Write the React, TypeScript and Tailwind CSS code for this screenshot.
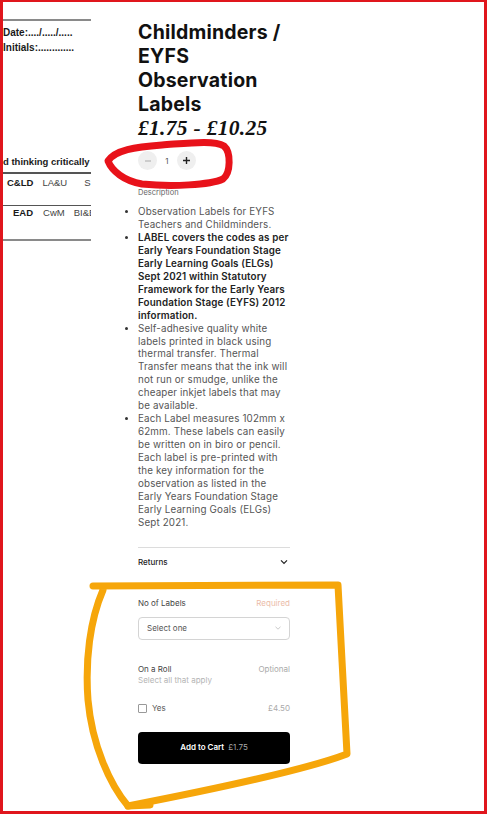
import React from "react";

const bodyFont = { fontFamily: "Inter, 'Noto Sans', sans-serif" };

const bullets: { bold?: boolean; lines: string[] }[] = [
  { lines: ["Observation Labels for EYFS", "Teachers and Childminders."] },
  {
    bold: true,
    lines: [
      "LABEL covers the codes as per",
      "Early Years Foundation Stage",
      "Early Learning Goals (ELGs)",
      "Sept 2021 within Statutory",
      "Framework for the Early Years",
      "Foundation Stage (EYFS) 2012",
      "information.",
    ],
  },
  {
    lines: [
      "Self-adhesive quality white",
      "labels printed in black using",
      "thermal transfer. Thermal",
      "Transfer means that the ink will",
      "not run or smudge, unlike the",
      "cheaper inkjet labels that may",
      "be available.",
    ],
  },
  {
    lines: [
      "Each Label measures 102mm x",
      "62mm. These labels can easily",
      "be written on in biro or pencil.",
      "Each label is pre-printed with",
      "the key information for the",
      "observation as listed in the",
      "Early Years Foundation Stage",
      "Early Learning Goals (ELGs)",
      "Sept 2021.",
    ],
  },
];

function LabelPreview() {
  return (
    <div
      className="w-[88px] shrink-0 overflow-hidden text-[#1a1a1a]"
      style={{ fontFamily: "'Liberation Sans', Arial, sans-serif" }}
    >
      <div className="mt-[17px] h-[2px] w-[88px] bg-[#8a8a8a]" />
      <div className="mt-[4px] text-[10px] font-bold leading-[15px]">Date:..../...../.....</div>
      <div className="text-[10px] font-bold leading-[15px]">Initials:.............</div>
      <div className="mt-[101px] whitespace-nowrap text-[9.5px] font-bold leading-[12px]">
        d thinking critically
      </div>
      <div className="mt-[4px] h-[1.5px] w-[88px] bg-[#555]" />
      <div className="mt-[3px] flex whitespace-nowrap text-[9.5px] leading-[12px]">
        <span className="ml-[4px] font-bold">C&amp;LD</span>
        <span className="ml-[9px] text-[#444]">LA&amp;U</span>
        <span className="ml-[17px] text-[#444]">S</span>
      </div>
      <div className="mt-[16px] h-[1.5px] w-[88px] bg-[#555]" />
      <div className="mt-[1px] flex whitespace-nowrap text-[9.5px] leading-[12px]">
        <span className="ml-[10px] font-bold">EAD</span>
        <span className="ml-[10px] text-[#444]">CwM</span>
        <span className="ml-[9px] text-[#444]">BI&amp;E</span>
      </div>
      <div className="mt-[20px] h-[2px] w-[88px] bg-[#8a8a8a]" />
    </div>
  );
}

function Quantity() {
  return (
    <div className="mt-[11px] flex items-center">
      <button className="flex h-[19px] w-[19px] items-center justify-center rounded-full bg-[#efefef]">
        <svg width="8" height="8" viewBox="0 0 8 8">
          <path d="M1 4h6" stroke="#b5b5b5" strokeWidth="1.2" />
        </svg>
      </button>
      <span className="w-[20px] text-center text-[8px] text-[#555]">1</span>
      <button className="flex h-[19px] w-[19px] items-center justify-center rounded-full bg-[#efefef]">
        <svg width="9" height="9" viewBox="0 0 9 9">
          <path d="M1 4.5h7M4.5 1v7" stroke="#222" strokeWidth="1.4" />
        </svg>
      </button>
    </div>
  );
}

function Options() {
  return (
    <div className="text-[8px] leading-[11px]">
      <div className="mt-[22px] flex justify-between">
        <span className="text-[#444]">No of Labels</span>
        <span className="text-[#ebbca8]">Required</span>
      </div>
      <div className="mt-[8px] flex h-[23px] items-center justify-between rounded-[4px] border border-[#d4d4d4] pl-[8px] pr-[8px]">
        <span className="text-[#555]">Select one</span>
        <svg width="6" height="4" viewBox="0 0 6 4">
          <path d="M0.5 0.8 3 3.2 5.5 0.8" fill="none" stroke="#bbb" strokeWidth="0.8" />
        </svg>
      </div>
      <div className="mt-[24px] flex justify-between">
        <span className="text-[#444]">On a Roll</span>
        <span className="text-[#aaa]">Optional</span>
      </div>
      <div className="text-[#b5b5b5]">Select all that apply</div>
      <div className="mt-[17px] flex items-center justify-between">
        <div className="flex items-center gap-[5px]">
          <span className="h-[9px] w-[9px] rounded-[1px] border border-[#999] bg-white" />
          <span className="text-[#555]">Yes</span>
        </div>
        <span className="text-[#aaa]">£4.50</span>
      </div>
      <button className="mt-[18px] flex h-[32px] w-full items-center justify-center gap-[4px] rounded-[4px] bg-black">
        <span className="font-semibold text-white">Add to Cart</span>
        <span className="text-[#a8a8a8]">£1.75</span>
      </button>
    </div>
  );
}

function ProductInfo() {
  return (
    <div className="ml-[47px] w-[152px] shrink-0" style={bodyFont}>
      <h1 className="mt-[18px] text-[19.5px] font-bold leading-[24px] tracking-[0.2px] text-[#111]">
        Childminders / EYFS Observation Labels
      </h1>
      <div
        className="text-[21.5px] font-bold italic leading-[24px] tracking-[0.3px] text-[#111]"
        style={{ fontFamily: "'Liberation Serif', 'Times New Roman', serif" }}
      >
        £1.75 - £10.25
      </div>
      <Quantity />
      <div className="mt-[18px] text-[7.5px] leading-[10px] text-[#666]">Description</div>
      <ul className="mt-[8px] list-disc whitespace-nowrap pl-0 text-[9.8px] leading-[12.95px] tracking-[0.15px] text-[#555] marker:text-[#333]">
        {bullets.map((b, i) => (
          <li key={i} className={b.bold ? "font-semibold text-[#222]" : ""}>
            {b.lines.map((l, j) => (
              <React.Fragment key={j}>
                {j > 0 && <br />}
                {l}
              </React.Fragment>
            ))}
          </li>
        ))}
      </ul>
      <div className="mt-[17px] flex h-[29px] items-center justify-between border-t border-[#dcdcdc]">
        <span className="text-[8px] font-medium text-[#222]">Returns</span>
        <svg width="8" height="6" viewBox="0 0 8 6" className="mr-[2px]">
          <path d="M1 1.3 4 4.3 7 1.3" fill="none" stroke="#222" strokeWidth="1.2" />
        </svg>
      </div>
      <Options />
    </div>
  );
}

export default function App() {
  return (
    <div className="relative h-[814px] w-[487px] overflow-hidden border-x-[3px] border-b-[3px] border-t-[2px] border-[#e0161d] bg-white">
      <div className="flex">
        <LabelPreview />
        <ProductInfo />
      </div>
      <svg
        className="pointer-events-none absolute left-[-3px] top-[-2px]"
        width="487"
        height="814"
        viewBox="0 0 487 814"
        fill="none"
      >
        <path
          d="M108 161 C115 150 135 147 162 145 C190 143 214 140 224 146 C231 152 231 173 223 179 C210 185 172 187 142 184 C124 181 112 171 108 161 Z"
          stroke="#e8121a"
          strokeWidth="7"
          strokeLinejoin="round"
        />
        <path
          d="M93 586 L338 585 C341 640 344 700 347 754 C300 772 200 792 128 806 C110 785 92 745 88 700 C85 660 90 620 103 590"
          stroke="#f6a60a"
          strokeWidth="7"
          strokeLinecap="round"
          strokeLinejoin="round"
        />
        <path d="M128 806 L150 805" stroke="#f6a60a" strokeWidth="7" strokeLinecap="round" />
      </svg>
    </div>
  );
}
